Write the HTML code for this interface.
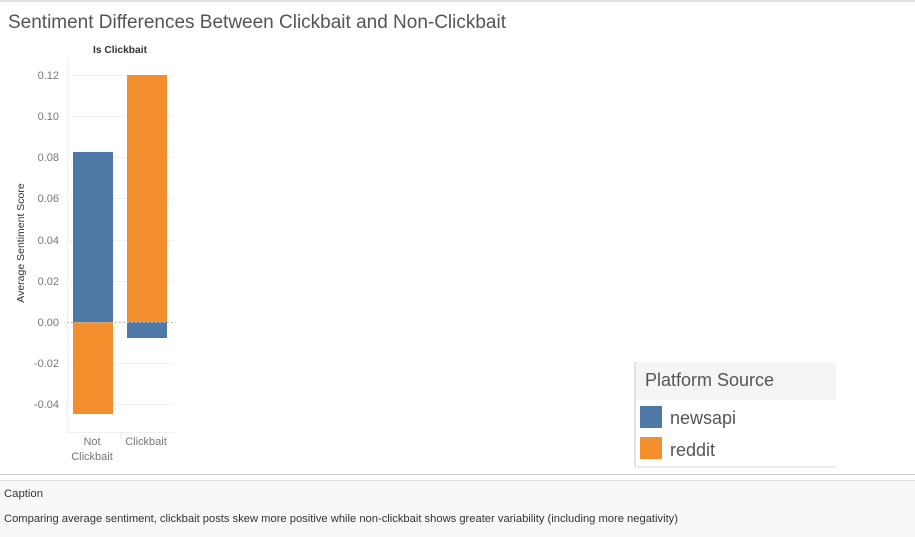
<!DOCTYPE html>
<html><head><style>
body{margin:0;width:915px;height:537px;overflow:hidden;background:#fff;font-family:"Liberation Sans",sans-serif;}
</style></head><body>
<svg width="915" height="537" xmlns="http://www.w3.org/2000/svg" style="position:absolute;left:0;top:0;font-family:'Liberation Sans',sans-serif">
<rect x="0" y="0" width="915" height="2" fill="#e0e0e0"/>
<text x="8" y="28" font-size="19" fill="#555" textLength="498" lengthAdjust="spacingAndGlyphs">Sentiment Differences Between Clickbait and Non-Clickbait</text>
<text x="120" y="53" font-size="10.5" fill="#333" text-anchor="middle" font-weight="bold" textLength="54" lengthAdjust="spacingAndGlyphs">Is Clickbait</text>
<!-- grid -->
<g stroke="#f0f0f0" stroke-width="1">
<line x1="67" y1="75.5" x2="174" y2="75.5"/>
<line x1="67" y1="116.5" x2="174" y2="116.5"/>
<line x1="67" y1="157.5" x2="174" y2="157.5"/>
<line x1="67" y1="198.5" x2="174" y2="198.5"/>
<line x1="67" y1="240.5" x2="174" y2="240.5"/>
<line x1="67" y1="281.5" x2="174" y2="281.5"/>
<line x1="67" y1="363.5" x2="174" y2="363.5"/>
<line x1="67" y1="404.5" x2="174" y2="404.5"/>
<line x1="67.5" y1="58" x2="67.5" y2="432"/>
<line x1="67" y1="432.5" x2="174" y2="432.5"/>
<line x1="120.5" y1="432" x2="120.5" y2="438"/>
</g>
<g font-size="11" fill="#777" text-anchor="end">
<text x="59" y="79">0.12</text>
<text x="59" y="120">0.10</text>
<text x="59" y="161">0.08</text>
<text x="59" y="202">0.06</text>
<text x="59" y="244">0.04</text>
<text x="59" y="285">0.02</text>
<text x="59" y="326">0.00</text>
<text x="59" y="367">-0.02</text>
<text x="59" y="408">-0.04</text>
</g>
<text transform="translate(24,243) rotate(-90)" font-size="10.5" fill="#333" text-anchor="middle">Average Sentiment Score</text>
<rect x="73" y="152" width="40" height="170" fill="#4e79a7"/>
<rect x="73" y="322" width="40" height="92" fill="#f28e2b"/>
<rect x="127" y="75" width="40" height="247" fill="#f28e2b"/>
<rect x="127" y="322" width="40" height="16" fill="#4e79a7"/>
<line x1="67" y1="322.5" x2="174" y2="322.5" stroke="#bbb" stroke-dasharray="2,2"/>
<g font-size="11" fill="#777" text-anchor="middle">
<text x="92" y="445">Not</text>
<text x="92" y="460">Clickbait</text>
<text x="146" y="445">Clickbait</text>
</g>
<!-- legend -->
<rect x="634" y="362" width="202" height="38" fill="#f5f5f5"/>
<rect x="634" y="362" width="2" height="106" fill="#e2e2e2"/>
<rect x="634" y="466" width="202" height="2" fill="#ececec"/>
<text x="645" y="386" font-size="18" fill="#555">Platform Source</text>
<rect x="640" y="406" width="22" height="22" fill="#4e79a7"/>
<rect x="640" y="437" width="22" height="22" fill="#f28e2b"/>
<text x="670" y="424" font-size="18" fill="#555">newsapi</text>
<text x="670" y="456" font-size="18" fill="#555">reddit</text>
<!-- caption -->
<rect x="0" y="474" width="915" height="1" fill="#ccc"/>
<rect x="0" y="480" width="915" height="57" fill="#f8f8f8"/>
<rect x="0" y="480" width="915" height="1" fill="#ddd"/>
<text x="4" y="497" font-size="11" fill="#333" textLength="39" lengthAdjust="spacingAndGlyphs">Caption</text>
<text x="4" y="522" font-size="11" fill="#333" textLength="674" lengthAdjust="spacingAndGlyphs">Comparing average sentiment, clickbait posts skew more positive while non-clickbait shows greater variability (including more negativity)</text>
</svg>
</body></html>
